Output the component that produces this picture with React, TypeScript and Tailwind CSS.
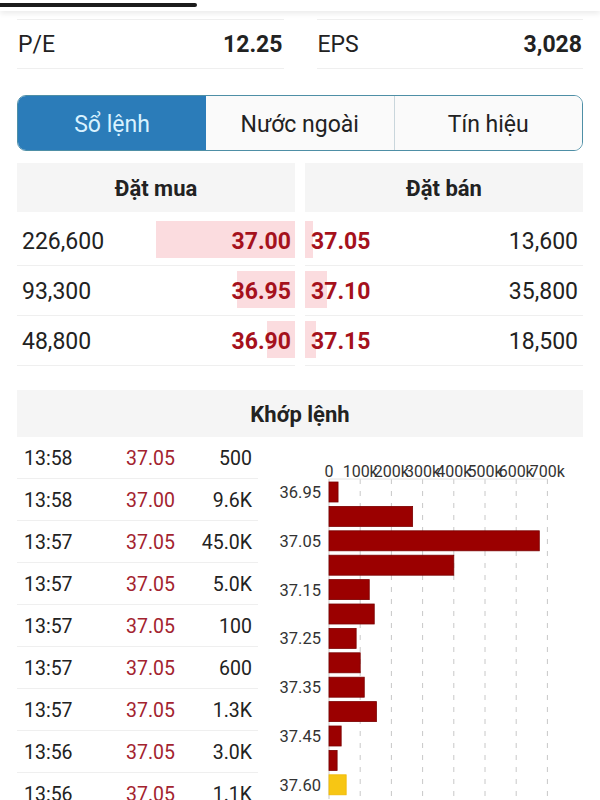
const orderBook = [
  { bidQty: '226,600', bid: '37.00', bidPct: 50, ask: '37.05', askQty: '13,600', askPct: 3 },
  { bidQty: '93,300', bid: '36.95', bidPct: 21, ask: '37.10', askQty: '35,800', askPct: 8 },
  { bidQty: '48,800', bid: '36.90', bidPct: 10, ask: '37.15', askQty: '18,500', askPct: 4 },
];

const trades = [
  ['13:58', '37.05', '500'],
  ['13:58', '37.00', '9.6K'],
  ['13:57', '37.05', '45.0K'],
  ['13:57', '37.05', '5.0K'],
  ['13:57', '37.05', '100'],
  ['13:57', '37.05', '600'],
  ['13:57', '37.05', '1.3K'],
  ['13:56', '37.05', '3.0K'],
  ['13:56', '37.05', '1.1K'],
];

// volume by price, in thousands
const volumes = [
  { label: '36.95', v: 29 },
  { label: '', v: 268 },
  { label: '37.05', v: 674 },
  { label: '', v: 400 },
  { label: '37.15', v: 129 },
  { label: '', v: 145 },
  { label: '37.25', v: 87 },
  { label: '', v: 100 },
  { label: '37.35', v: 113 },
  { label: '', v: 152 },
  { label: '37.45', v: 39 },
  { label: '', v: 26 },
  { label: '37.60', v: 55, last: true },
];

const X0 = 71;
const STEP = 31.2;

const VolumeChart = () => (
  <svg width={342} height={362} className="block shrink-0">
    {[0, 1, 2, 3, 4, 5, 6, 7].map((k) => (
      <g key={k}>
        <line
          x1={X0 + k * STEP}
          x2={X0 + k * STEP}
          y1={42}
          y2={362}
          stroke="#c8c8c8"
          strokeDasharray={k === 0 ? undefined : '5 7'}
        />
        <text
          x={X0 + k * STEP}
          y={40}
          textAnchor="middle"
          fontSize={16}
          fill="#333"
          fontFamily="Roboto, sans-serif"
        >
          {k === 0 ? '0' : `${k}00k`}
        </text>
      </g>
    ))}
    <line x1={X0} x2={X0 + 7 * STEP} y1={42} y2={42} stroke="#e2e2e2" />
    {volumes.map((b, i) => {
      const y = 45 + i * 24.4;
      return (
        <g key={i}>
          <rect
            x={X0}
            y={y}
            width={(b.v / 100) * STEP}
            height={20}
            fill={b.last ? '#f7c614' : '#9b0000'}
            stroke={b.last ? '#f0b800' : '#7a0000'}
            strokeWidth={0.8}
          />
          {b.label && (
            <text
              x={X0 - 8}
              y={y + 16}
              textAnchor="end"
              fontSize={16.5}
              fill="#333"
              fontFamily="Roboto, sans-serif"
            >
              {b.label}
            </text>
          )}
        </g>
      );
    })}
  </svg>
);

export default function App() {
  return (
    <div className="w-[600px] h-[800px] overflow-hidden bg-white text-[#222] font-['Roboto','Liberation_Sans',sans-serif]">
      <div className="h-[11px] bg-white shadow-[0_3px_5px_rgba(0,0,0,0.07)]">
        <div className="h-[4px] w-[197px] translate-y-[3px] bg-[#1c1c1c] rounded-r-sm" />
      </div>

      <div className="px-[17px]">
        <div className="mt-[8px] grid grid-cols-2 gap-[33px]">
          <div className="h-[50px] flex items-center justify-between border-y border-[#efefef] px-[1px] pt-[2px] text-[23px]">
            <span>P/E</span>
            <span className="font-bold">12.25</span>
          </div>
          <div className="h-[50px] flex items-center justify-between border-y border-[#efefef] px-[1px] pt-[2px] text-[23px]">
            <span>EPS</span>
            <span className="font-bold">3,028</span>
          </div>
        </div>

        <div className="mt-[26px] h-[56px] flex rounded-[9px] border-[1.5px] border-[#4e8fa6] overflow-hidden text-[23px]">
          <div className="w-[188px] flex items-center justify-center pt-[4px] bg-[#2b7cb9] text-[#d9f2ff]">Sổ lệnh</div>
          <div className="flex-1 flex items-center justify-center pt-[4px] bg-[#fafafa] border-r border-[#c9d6dc]">Nước ngoài</div>
          <div className="flex-1 flex items-center justify-center pt-[4px] bg-[#fafafa]">Tín hiệu</div>
        </div>

        <div className="mt-[12px] grid grid-cols-2 gap-[10px]">
          {['Đặt mua', 'Đặt bán'].map((h) => (
            <div key={h} className="h-[49px] flex items-center justify-center pt-[2px] bg-[#f5f5f5] text-[22px] font-bold">
              {h}
            </div>
          ))}
        </div>

        <div className="mt-[4px] flex flex-col">
          {orderBook.map((r) => (
            <div key={r.bid} className="grid grid-cols-2 gap-[10px]">
              <div className="relative h-[50px] flex items-center justify-between border-b border-[#efefef] pl-[5px] pr-[4px] pt-[3px] text-[23px]">
                <div className="absolute right-0 top-[5px] bottom-[7px] bg-[#fbdcdf]" style={{ width: `${r.bidPct}%` }} />
                <span className="relative">{r.bidQty}</span>
                <span className="relative font-bold text-[#a5111c]">{r.bid}</span>
              </div>
              <div className="relative h-[50px] flex items-center justify-between border-b border-[#efefef] pl-[6px] pr-[5px] pt-[3px] text-[23px]">
                <div className="absolute left-0 top-[5px] bottom-[7px] bg-[#fbdcdf]" style={{ width: `${r.askPct}%` }} />
                <span className="relative font-bold text-[#a5111c]">{r.ask}</span>
                <span className="relative">{r.askQty}</span>
              </div>
            </div>
          ))}
        </div>

        <div className="mt-[24px] h-[47px] flex items-center justify-center pt-[2px] bg-[#f5f5f5] text-[22px] font-bold">
          Khớp lệnh
        </div>
      </div>

      <div className="flex">
        <div className="ml-[17px] w-[241px] flex flex-col">
          {trades.map((t, i) => (
            <div key={i} className="h-[42px] flex items-center border-b border-[#efefef] pt-[3px] text-[19.5px]">
              <span className="w-[109px] pl-[7px]">{t[0]}</span>
              <span className="text-[#a3232f]">{t[1]}</span>
              <span className="ml-auto pr-[6px]">{t[2]}</span>
            </div>
          ))}
        </div>
        <VolumeChart />
      </div>
    </div>
  );
}
